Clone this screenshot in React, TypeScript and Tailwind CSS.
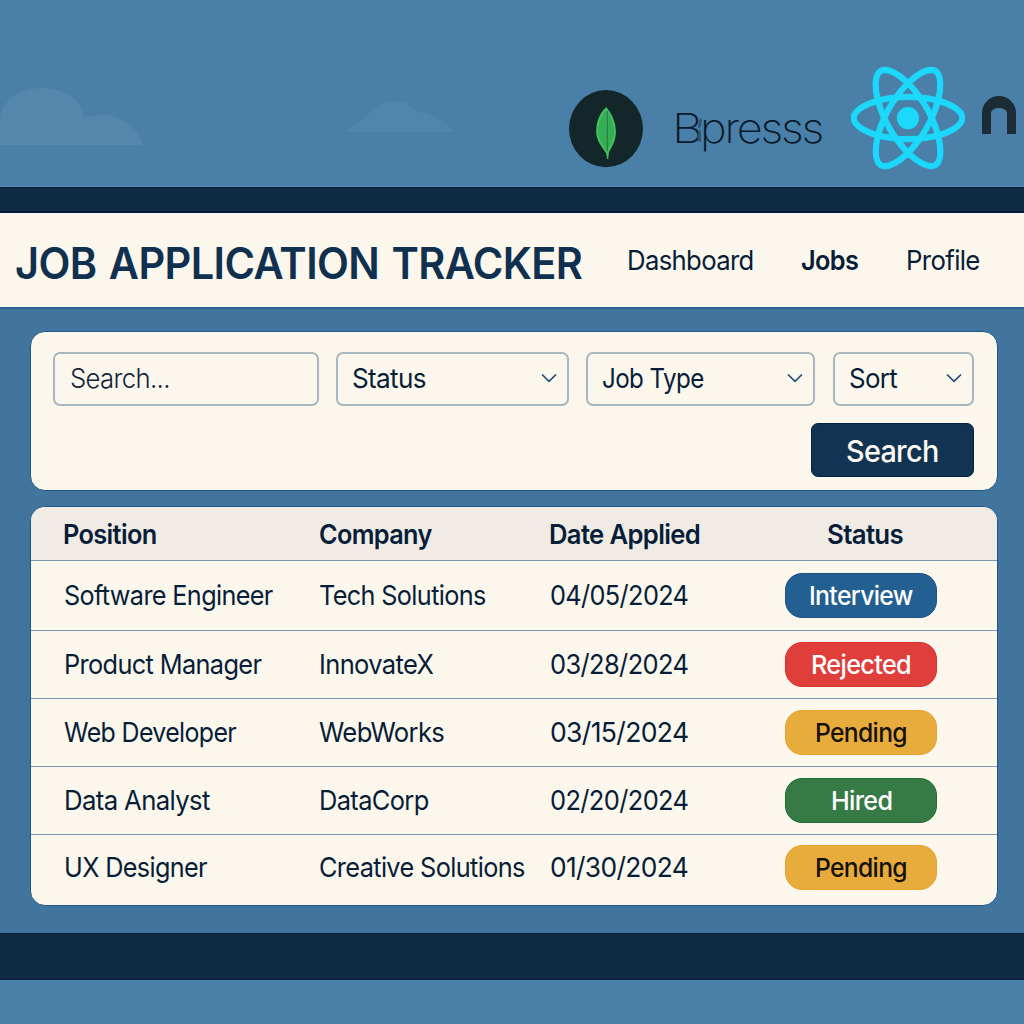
import { useLayoutEffect, useRef, useState, type ReactNode } from "react";
import { SiReact } from "react-icons/si";

type FitProps = { width: number; className?: string; children: ReactNode };

/** Condenses a line of text horizontally so that it fills the given width. */
function Fit({ width, className = "", children }: FitProps) {
  const ref = useRef<HTMLSpanElement>(null);
  const [scale, setScale] = useState(1);
  useLayoutEffect(() => {
    if (ref.current) setScale(width / ref.current.offsetWidth);
  }, [width]);
  return (
    <span className={`block shrink-0 ${className}`} style={{ width }}>
      <span
        ref={ref}
        className="inline-block origin-left whitespace-nowrap"
        style={{ transform: `scaleX(${scale})` }}
      >
        {children}
      </span>
    </span>
  );
}

function Chevron() {
  return (
    <svg width="16" height="10" viewBox="0 0 16 10" fill="none" className="shrink-0">
      <path d="M1 1.5 8 8.3 15 1.5" stroke="#1f4e78" strokeWidth="1.7" />
    </svg>
  );
}

function Clouds() {
  return (
    <svg className="absolute left-0 top-[80px]" width="460" height="70" viewBox="0 0 460 70">
      <path
        d="M0 65V38C3 19 20 8 43 8C64 8 82 20 84 37C92 37 97 34 108 35C122 37 139 49 143 65Z"
        fill="#5587ac"
      />
      <path
        d="M342 52C354 47 364 37 372 30C384 18 409 19 417 32C430 31 447 43 455 52Z"
        fill="#5085ae"
      />
    </svg>
  );
}

function Leaf() {
  return (
    <svg width="76" height="80" viewBox="0 0 76 80" className="mt-[89px] shrink-0">
      <ellipse cx="38" cy="39.7" rx="37" ry="38.6" fill="#13272b" />
      <path
        d="M38.200 18C31 25 28 34 28.200 43C28.500 52 34 58 38 64L39.200 70H40.200L41 63C45 56 48 51 47.900 42C47.600 33 44 25 38.200 18Z"
        fill="#3fc45f"
      />
      <path d="M38.300 21C32.500 28 30.200 35 30.300 43C30.600 50 34.500 56 38.900 62Z" fill="#36ac56" />
      <path d="M39.800 23C44 29 45.800 35 45.900 42C46 49 43.500 54 39.900 60Z" fill="#36ac56" />
      <path d="M39.300 22V62" stroke="#247742" strokeWidth="1.100" />
    </svg>
  );
}

function Wordmark() {
  return (
    <div className="relative ml-[28px] mt-[103px] flex shrink-0 text-[41px] font-[250] leading-[50px] tracking-[-0.05em] text-[#071a2b]">
      <Fit width={28}>B</Fit>
      <Fit width={122}>presss</Fit>
      <svg className="absolute left-[24px] top-[14px]" width="8" height="28" viewBox="0 0 8 28">
        <path d="M4 1 6 3 5 9 3 12 2 9Z M4 12 5 18 5 25 2 24 1 18Z" fill="#2b526f" />
      </svg>
    </div>
  );
}

const filters = [
  { label: "Status", text: 74, box: "ml-[17px] w-[233px]" },
  { label: "Job Type", text: 102, box: "ml-[17px] w-[229px]" },
  { label: "Sort", text: 48, box: "ml-[18px] w-[141px]" },
];

const headings = [
  { label: "Position", text: 94 },
  { label: "Company", text: 113 },
  { label: "Date Applied", text: 151 },
];

const rows = [
  { job: "Software Engineer", jw: 209, company: "Tech Solutions", cw: 167, date: "04/05/2024", status: "Interview", sw: 104, pill: "bg-[#235f91] text-white border-[#1b5587]", row: "h-[70px] pb-px" },
  { job: "Product Manager", jw: 197, company: "InnovateX", cw: 114, date: "03/28/2024", status: "Rejected", sw: 100, pill: "bg-[#df3e3a] text-white border-[#dd302f]", row: "h-[68px] pb-px" },
  { job: "Web Developer", jw: 172, company: "WebWorks", cw: 125, date: "03/15/2024", status: "Pending", sw: 92, pill: "bg-[#e8ac3c] text-[#15120c] border-[#e8a42c]", row: "h-[68px] pb-[2px]" },
  { job: "Data Analyst", jw: 146, company: "DataCorp", cw: 110, date: "02/20/2024", status: "Hired", sw: 61, pill: "bg-[#367b45] text-white border-[#216d32]", row: "h-[68px] pb-[2px]" },
  { job: "UX Designer", jw: 143, company: "Creative Solutions", cw: 206, date: "01/30/2024", status: "Pending", sw: 92, pill: "bg-[#e8ac3c] text-[#15120c] border-[#e8a42c]", row: "h-[70px] pb-[6px]" },
];

const columns = "grid grid-cols-[256px_230px_179px_269px] items-center pl-[32px]";

export default function App() {
  return (
    <div className="flex h-[1024px] w-[1024px] flex-col overflow-hidden bg-[#4a7fa7] font-['Inter',sans-serif] text-[27.500px] leading-[34px] tracking-[-0.025em] text-[#071d38]">
      <div className="relative flex h-[187px] items-start border-b border-[#5490be] pl-[568px]">
        <Clouds />
        <Leaf />
        <Wordmark />
        <SiReact size={114} className="ml-[29px] mt-[61px] shrink-0 stroke-[#1cd8fb] stroke-[0.22] text-[#1cd8fb]" />
        <div className="ml-[17px] mt-[96px] h-[38px] w-[34px] shrink-0 rounded-t-[17px] border-x-[9px] border-t-[12px] border-[#1c2c36]" />
      </div>

      <div className="h-[26px] border-b-2 border-t border-b-[#041a36] border-t-[#071c33] bg-[#102c45]" />

      <header className="flex h-[94px] items-center bg-[#fcf7ec] pl-[15px]">
        <h1 className="mt-[6px] text-[43.500px] font-semibold leading-[52px] tracking-[-0.015em] text-[#10304f] [word-spacing:0.06em]">
          <Fit width={567}>JOB APPLICATION TRACKER</Fit>
        </h1>
        <nav className="flex">
          <Fit width={127} className="ml-[45px]">Dashboard</Fit>
          <Fit width={57} className="ml-[47px] font-semibold">Jobs</Fit>
          <Fit width={74} className="ml-[48px]">Profile</Fit>
        </nav>
      </header>

      <main className="flex h-[626px] flex-col border-t-2 border-[#2a6493] bg-[#41759d] pl-[30px] pt-[22px]">
        <section className="h-[160px] w-[968px] rounded-[15px] border border-[#1c568b] bg-[#fcf7ec] pl-[22px] pt-[20px]">
          <div className="flex h-[54px]">
            <div className="flex w-[266px] items-center rounded-[7px] border-2 border-[#a9b7bd] pb-[3px] pl-[15px] font-light text-[#10243a]">
              <Fit width={100}>Search...</Fit>
            </div>
            {filters.map((f) => (
              <div key={f.label} className={`flex items-center justify-between rounded-[7px] border-2 border-[#a9b7bd] pb-[2px] pl-[14px] pr-[10px] ${f.box}`}>
                <Fit width={f.text}>{f.label}</Fit>
                <Chevron />
              </div>
            ))}
          </div>
          <button className="ml-[758px] mt-[17px] flex h-[54px] w-[163px] items-center justify-center rounded-[7px] border border-[#06203f] bg-[#123452] pt-[2px] text-[30px] font-medium text-[#fdfaf2]">
            <Fit width={93}>Search</Fit>
          </button>
        </section>

        <section className="mt-[15px] h-[400px] w-[968px] overflow-hidden rounded-[15px] border border-[#1c568b] bg-[#fcf7ec]">
          <div className={`h-[54px] border-b border-[#7d99b0] bg-[#f0ece5] font-semibold ${columns}`}>
            {headings.map((h) => (
              <Fit key={h.label} width={h.text}>{h.label}</Fit>
            ))}
            <Fit width={76} className="ml-[99px]">Status</Fit>
          </div>
          {rows.map((r, i) => (
            <div key={i} className={`${columns} ${r.row} ${i < rows.length - 1 ? "border-b border-[#7d99b0]" : ""}`}>
              <Fit width={r.jw} className="ml-px">{r.job}</Fit>
              <Fit width={r.cw}>{r.company}</Fit>
              <Fit width={138} className="ml-px">{r.date}</Fit>
              <div className={`ml-[57px] mt-px flex h-[45px] w-[152px] items-center justify-center rounded-[17px] border pt-px text-[26px] font-medium ${r.pill}`}>
                <Fit width={r.sw}>{r.status}</Fit>
              </div>
            </div>
          ))}
        </section>
      </main>

      <div className="h-[47px] border-b-2 border-t border-b-[#0b2140] border-t-[#071c33] bg-[#102c45]" />
    </div>
  );
}
